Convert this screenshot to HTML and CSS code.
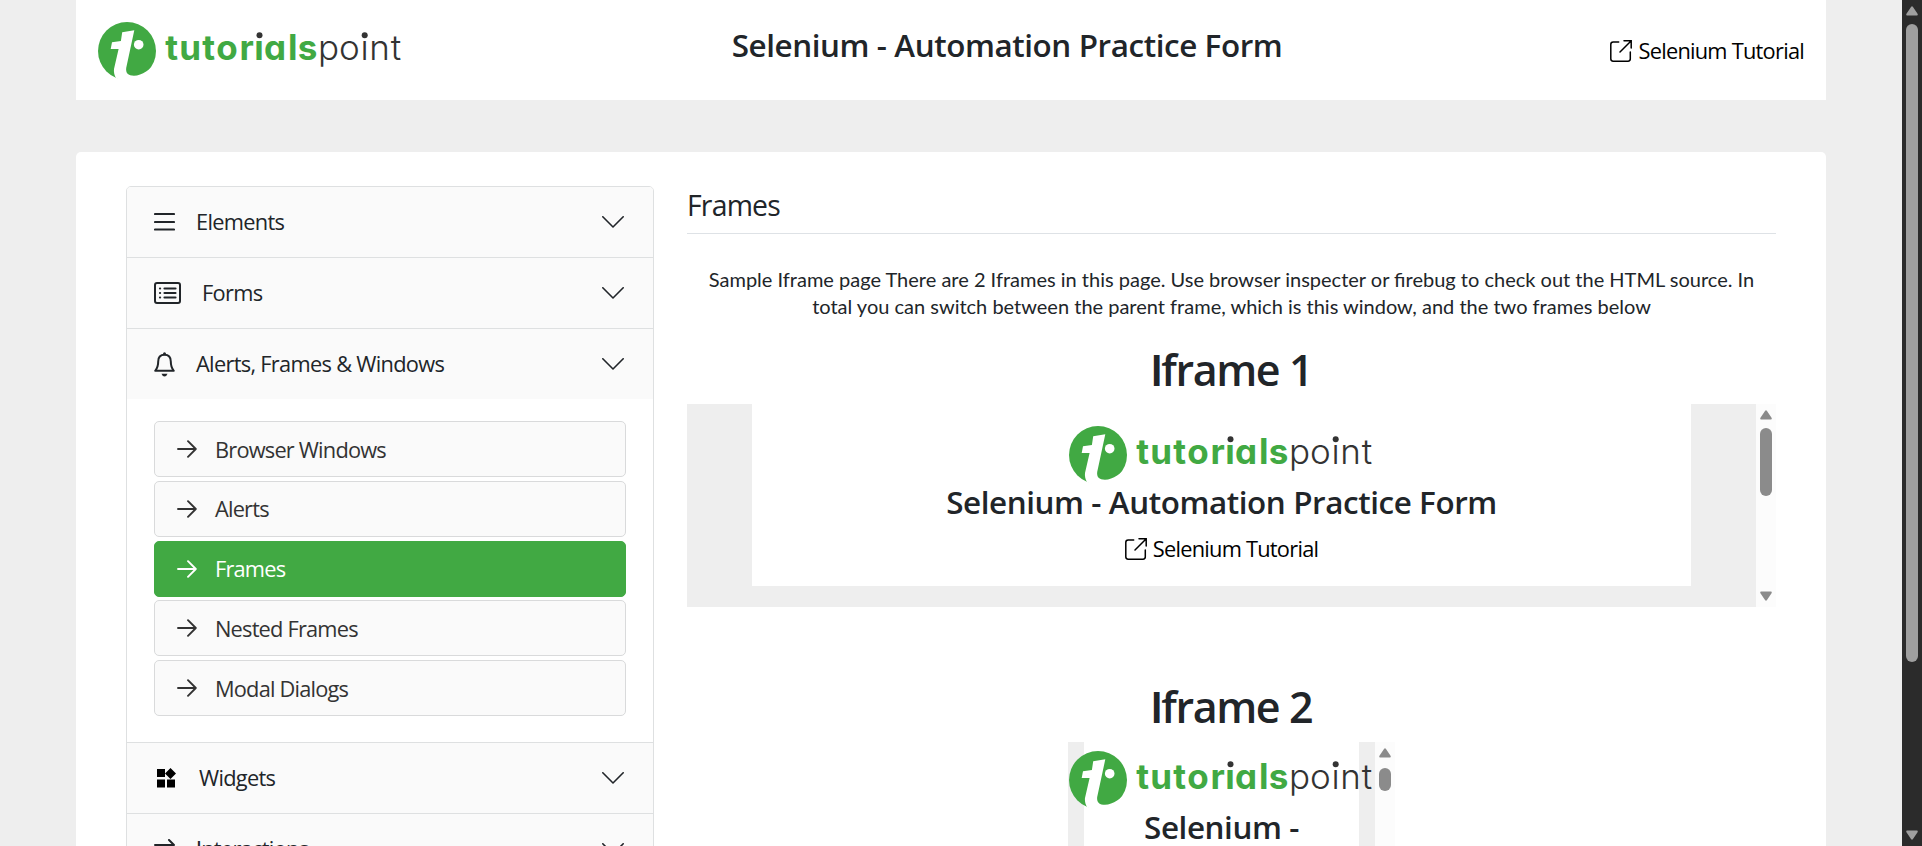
FILE: index.html
```html
<!DOCTYPE html>
<html lang="en">
<head>
<meta charset="utf-8">
<title>Selenium Practice - Frames</title>
<link rel="stylesheet" href="styles.css">
</head>
<body>
<svg class="defs" aria-hidden="true">
  <clipPath id="no-dots"><path d="M0 20H310V60H0ZM0 0H157V20H0ZM170 0H263V20H170ZM275 0H310V20H275Z"/></clipPath>
  <symbol id="logo" viewBox="0 0 310 60" overflow="visible">
    <circle cx="31" cy="31" r="29" fill="#41a943"/>
    <path fill="#fff" d="M38.3 10.3 26.2 12.3 24.9 21 16 22.3 14.7 29H22.6L18 49C17.6 52 18.4 55.500 20 58.200L27 61H50L60 41C55 49.500 46 55.700 38 55.700C32 55.700 29.600 53 30.200 48Z"/>
    <circle cx="42.700" cy="24.700" r="4.800" fill="#fff"/>
    <g clip-path="url(#no-dots)">
      <text class="wm-bold" y="39.500" x="69.200 83.200 106.300 120.200 143.600 158.300 167.900 191.900 201.800">tutorials</text>
      <text class="wm-thin" y="39.500" x="222 243 264.500 273.300 294.700">point</text>
    </g>
    <circle cx="163.500" cy="15.300" r="3" fill="#333"/>
    <circle cx="268.700" cy="15.300" r="3" fill="#333"/>
  </symbol>
  <symbol id="ext" viewBox="0 0 22 22">
    <path fill="none" stroke="currentColor" stroke-width="1.500" stroke-linecap="round" d="M8.700 2H3.200Q.8 2 .8 4.400V18.800Q.8 21.200 3.200 21.200H18Q20.300 21.200 20.300 18.800V12M14 .8H21.200V8M21 1 10 12"/>
  </symbol>
  <symbol id="chev" viewBox="0 0 22 12">
    <path fill="none" stroke="#212529" stroke-width="1.600" stroke-linecap="round" stroke-linejoin="round" d="M.8.8 11 11 21.200.8"/>
  </symbol>
  <symbol id="arr" viewBox="0 0 20 18">
    <path fill="none" stroke="currentColor" stroke-width="1.900" stroke-linecap="round" stroke-linejoin="round" d="M1 9H18.500M11 1.200 18.800 9 11 16.800"/>
  </symbol>
  <symbol id="tri" viewBox="0 0 12 10">
    <path fill="currentColor" d="M1 9.500Q0 9.500.3 8L5 1Q6-.5 7 1L11.700 8Q12 9.500 11 9.500Z"/>
  </symbol>
</svg>
<div class="window">
  <div class="viewport">
    <header class="header">
      <svg class="logo"><use href="#logo"/></svg>
      <h1 class="title">Selenium - Automation Practice Form</h1>
      <a class="tutorial"><svg class="ext"><use href="#ext"/></svg><span>Selenium Tutorial</span></a>
    </header>
    <main class="card">
      <nav class="menu">
        <div class="item first"><svg class="ico-bars" viewBox="0 0 21 20"><path stroke="#212529" stroke-width="2.200" stroke-linecap="round" d="M1 2H20M1 10H20M1 17.500H20"/></svg><span>Elements</span><svg class="chev"><use href="#chev"/></svg></div>
        <div class="item"><svg class="ico-form" viewBox="0 0 27 22"><rect x="1" y="1" width="25" height="20" rx="2" fill="none" stroke="#212529" stroke-width="2"/><path stroke="#212529" stroke-width="2.200" stroke-linecap="round" d="M10.500 6.500H21.500M10.500 11H21.500M10.500 15.500H21.500M6 6.500H6.100M6 11H6.100M6 15.500H6.100"/></svg><span>Forms</span><svg class="chev"><use href="#chev"/></svg></div>
        <div class="item"><svg class="ico-bell" viewBox="0 0 21 25"><path fill="none" stroke="#212529" stroke-width="2" stroke-linejoin="round" d="M10.500 2.700C6 2.700 4.200 6 4.200 9.500C4.200 14 3.200 16.500 1.200 18.800H19.800C17.800 16.500 16.800 14 16.800 9.500C16.800 6 15 2.700 10.500 2.700Z"/><circle cx="10.500" cy="1.800" r="1.500" fill="#212529"/><path fill="#212529" d="M7.500 21.700H13.500Q12.500 24.500 10.500 24.500T7.500 21.700Z"/></svg><span>Alerts, Frames &amp; Windows</span><svg class="chev"><use href="#chev"/></svg></div>
        <ul class="sub">
          <li><svg class="arr"><use href="#arr"/></svg><span>Browser Windows</span></li>
          <li><svg class="arr"><use href="#arr"/></svg><span>Alerts</span></li>
          <li class="active"><svg class="arr"><use href="#arr"/></svg><span>Frames</span></li>
          <li><svg class="arr"><use href="#arr"/></svg><span>Nested Frames</span></li>
          <li><svg class="arr"><use href="#arr"/></svg><span>Modal Dialogs</span></li>
        </ul>
        <div class="item ruled"><svg class="ico-widgets" viewBox="0 0 24 20"><path d="M3 1H11V9H3ZM3 11.500H11V19.500H3ZM13 11.500H21V19.500H13ZM16.500 0 22 5.500 16.500 11 11 5.500Z"/></svg><span>Widgets</span><svg class="chev"><use href="#chev"/></svg></div>
        <div class="item"><svg class="ico-swap" viewBox="0 0 21 20"><path fill="none" stroke="#212529" stroke-width="2" stroke-linecap="round" stroke-linejoin="round" d="M1 6H20M15 1 20 6 15 11M20 14H1M6 9 1 14 6 19"/></svg><span class="plain-i">Interactions</span><svg class="chev"><use href="#chev"/></svg></div>
      </nav>
      <section class="content">
        <h2 class="page-title">Frames</h2>
        <p class="intro">Sample Iframe page There are 2 Iframes in this page. Use browser inspecter or firebug to check out the HTML source. In<br>total you can switch between the parent frame, which is this window, and the two frames below</p>
        <h2 class="frame-title">Iframe 1</h2>
        <div class="frame">
          <div class="frame-page">
            <div class="inner">
              <svg class="logo"><use href="#logo"/></svg>
              <div class="title">Selenium - Automation Practice Form</div>
              <a class="tutorial"><svg class="ext"><use href="#ext"/></svg><span>Selenium Tutorial</span></a>
            </div>
          </div>
          <div class="bar"><svg class="tri"><use href="#tri"/></svg><i class="thumb"></i><svg class="tri down"><use href="#tri"/></svg></div>
        </div>
        <h2 class="frame-title second">Iframe 2</h2>
        <div class="frame small">
          <div class="frame-page">
            <div class="inner">
              <svg class="logo"><use href="#logo"/></svg>
              <div class="title">Selenium -</div>
            </div>
          </div>
          <div class="bar"><svg class="tri"><use href="#tri"/></svg><i class="thumb"></i></div>
        </div>
      </section>
    </main>
  </div>
  <div class="bar main-bar"><svg class="tri"><use href="#tri"/></svg><i class="thumb"></i><svg class="tri down"><use href="#tri"/></svg></div>
</div>
</body>
</html>
```
FILE: styles.css
```css
* { box-sizing: border-box; margin: 0; padding: 0; }
body { height: 846px; overflow: hidden; background: #eee; color: #212529; font-family: "Open Sans", "Noto Sans", sans-serif; font-size: 21.800px; }
.defs { position: absolute; width: 0; height: 0; }
svg { display: block; flex: none; }
.wm-bold, .wm-thin { font-family: Inter, "Open Sans", sans-serif; font-size: 35px; font-feature-settings: "cv11"; }
.wm-bold { font-weight: 750; fill: #41a943; }
.wm-thin { font-weight: 300; fill: #333; }

.window { display: flex; height: 846px; }
.viewport { flex: 1; height: 846px; padding: 0 76px; overflow: hidden; }
.header { display: grid; grid-template-columns: 310px 1fr 310px; align-items: start; width: 1750px; height: 100px; padding: 20px 22px 0 20px; background: #fff; }
.logo { width: 310px; height: 60px; overflow: visible; }
.title { font-size: 31.400px; font-weight: 600; line-height: 38px; letter-spacing: -.41px; text-align: center; white-space: nowrap; }
.header .title { margin: 6px 0 0 114px; }
.tutorial { display: flex; gap: 6px; line-height: 30px; color: #000; letter-spacing: -.75px; white-space: nowrap; }
.ext { width: 22px; height: 22px; margin-top: 4px; }
.header .tutorial { justify-content: flex-end; margin-top: 16px; }

.card { display: flex; align-items: flex-start; gap: 33px; width: 1750px; height: 900px; margin-top: 52px; padding: 34px 50px; border-radius: 5px; background: #fff; }
.menu { width: 528px; border: 1px solid #dee0e1; border-radius: 5px; overflow: hidden; }
.item { display: flex; align-items: center; height: 71px; padding: 0 29px 0 27px; background: #fafafa; }
.first { height: 70px; }
.item + .item, .ruled { border-top: 1px solid #dee0e1; }
.item span { margin: -1px 0 0 21px; letter-spacing: -.7px; white-space: nowrap; }
.chev { width: 22px; height: 12px; margin-left: auto; }
.ico-bars, .ico-swap { width: 21px; height: 20px; }
.ico-form { width: 27px; height: 22px; }
.ico-bell { width: 21px; height: 25px; }
.ico-widgets { width: 24px; height: 20px; }
.sub { display: flex; flex-direction: column; gap: 3.800px; height: 343px; padding: 22px 27px; list-style: none; }
.sub li { display: flex; align-items: center; flex: none; gap: 18px; height: 56px; padding-left: 22px; border: 1px solid #d9dadb; border-radius: 5px; background: #fafafa; color: #333; letter-spacing: -.8px; white-space: nowrap; }
.sub .active { border-color: #41a943; background: #41a943; color: #fff; }
.arr { width: 20px; height: 18px; }

.content { width: 1089px; }
.page-title { height: 48px; border-bottom: 1px solid #dee2e6; font-size: 28.400px; font-weight: 400; line-height: 38px; letter-spacing: -.8px; }
.intro { margin-top: 32px; font-family: Lato, sans-serif; font-size: 20px; line-height: 27px; text-align: center; white-space: nowrap; }
.frame-title { height: 61px; margin-top: 23px; font-size: 43px; font-weight: 600; line-height: 54px; letter-spacing: -1.400px; text-align: center; }
.frame-title.second { height: 62px; margin-top: 73px; }
.frame-title::first-letter, .plain-i::first-letter { font-family: Inter, sans-serif; }
.frame { display: flex; height: 203px; background: #eee; }
.frame-page { flex: 1; min-width: 0; padding: 0 65px; }
.inner { display: flex; flex-direction: column; align-items: center; height: 182px; padding-top: 20px; background: #fff; }
.frame .title { margin-top: -1px; }
.frame .tutorial { margin-top: 13px; }
.frame.small { width: 327px; margin: 0 auto; }
.small .frame-page { padding: 0 16px; }
.small .inner { height: 203px; padding-top: 7px; }

.bar { display: flex; flex: none; flex-direction: column; align-items: center; width: 20px; padding: 6px 0; background: #fcfcfc; color: #8b8b8b; }
.tri { width: 12px; height: 10px; }
.down { margin-top: auto; transform: rotate(180deg); }
.thumb { width: 12px; height: 68px; margin-top: 8px; border-radius: 6px; background: #8b8b8b; }
.small .thumb { height: 23px; margin-top: 10px; }
.main-bar { background: #2b2b2b; color: #9f9f9f; }
.main-bar .thumb { height: 638px; background: #9f9f9f; }
```
